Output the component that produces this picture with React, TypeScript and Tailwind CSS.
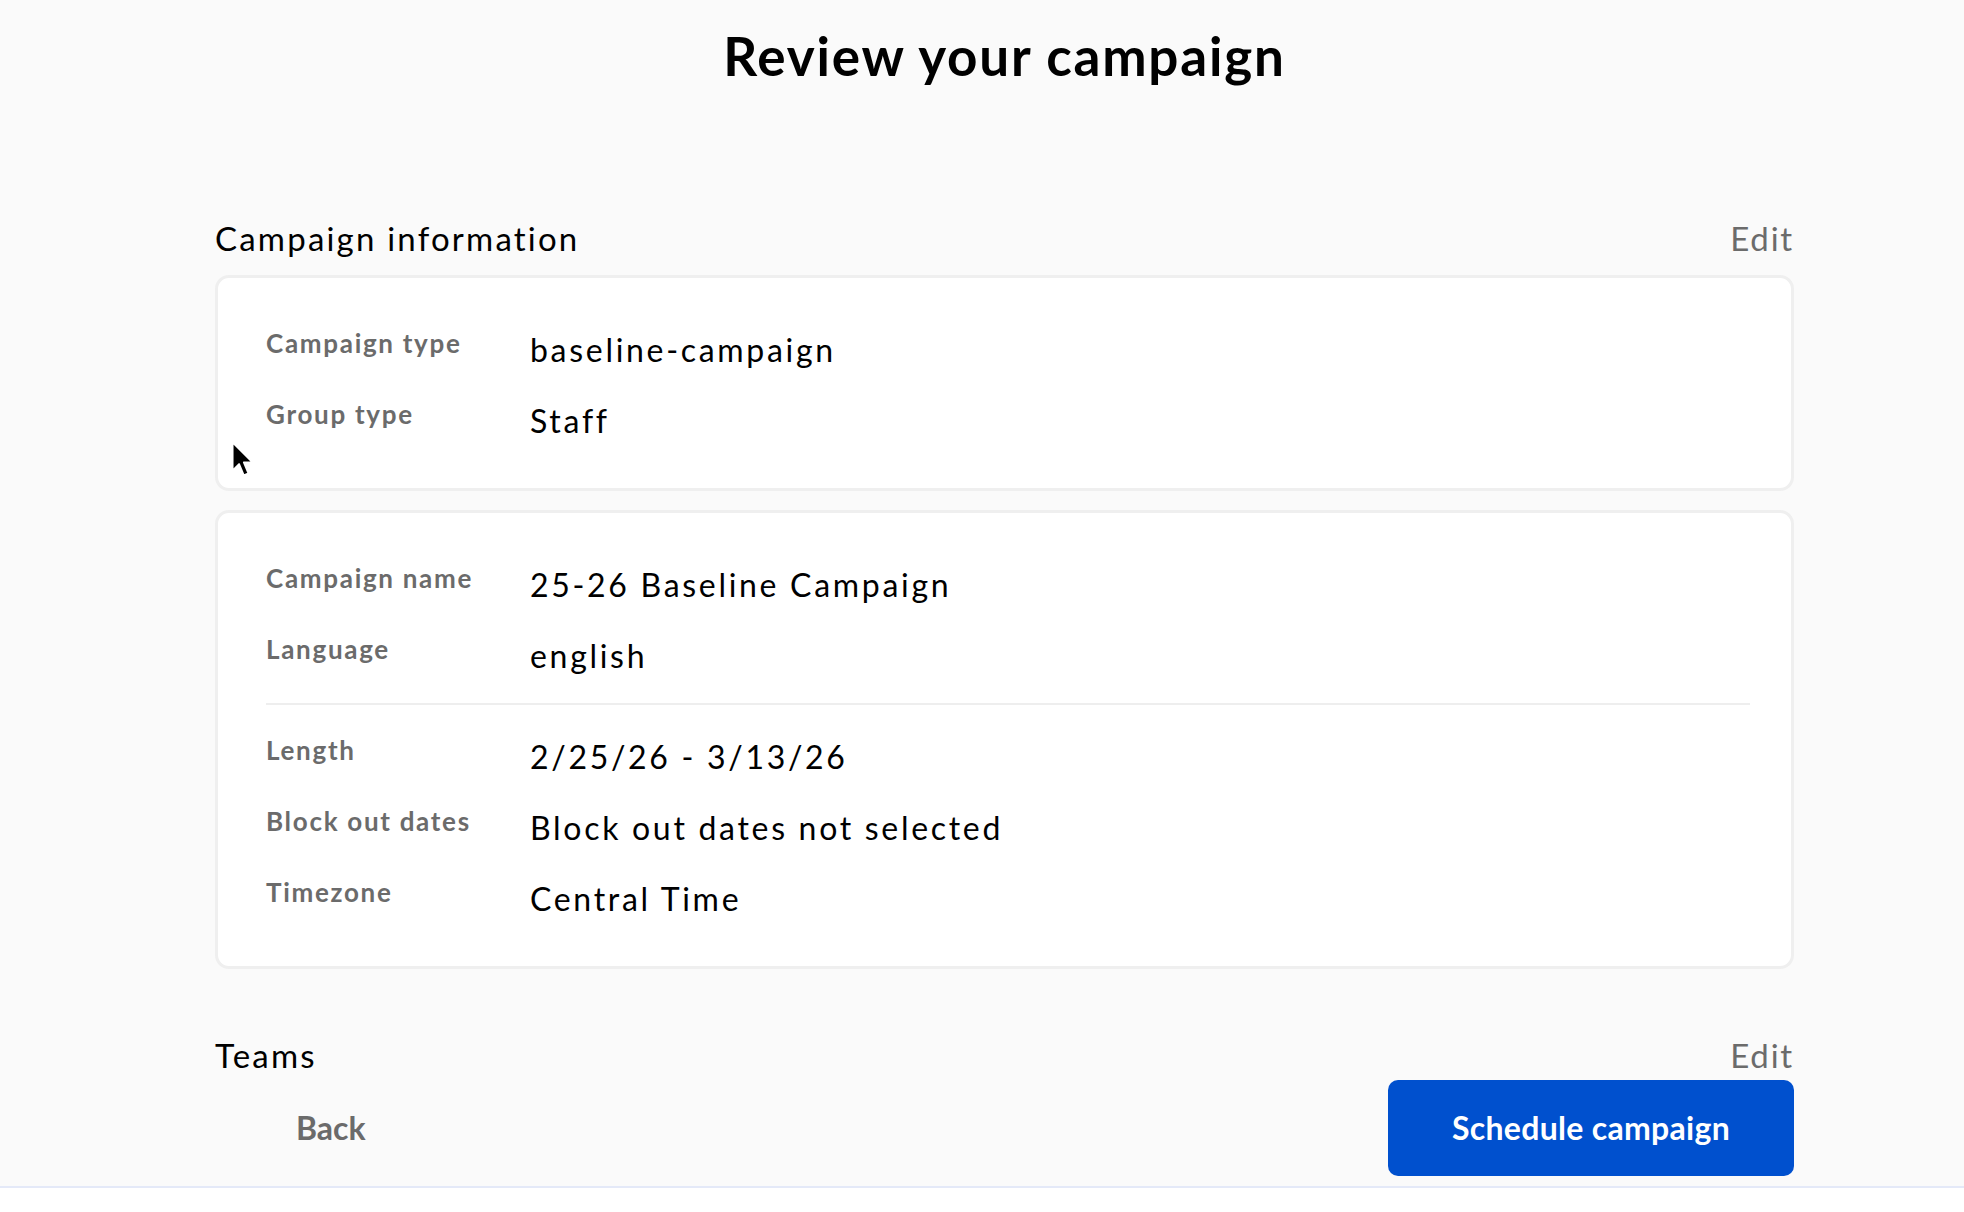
import React from 'react';

type Row = { label: string; value: string };

const typeRows: Row[] = [
  { label: 'Campaign type', value: 'baseline-campaign' },
  { label: 'Group type', value: 'Staff' },
];

const nameRows: Row[] = [
  { label: 'Campaign name', value: '25-26 Baseline Campaign' },
  { label: 'Language', value: 'english' },
];

const scheduleRows: Row[] = [
  { label: 'Length', value: '2/25/26 - 3/13/26' },
  { label: 'Block out dates', value: 'Block out dates not selected' },
  { label: 'Timezone', value: 'Central Time' },
];

function SectionHeader({ title }: { title: string }) {
  return (
    <div className="flex items-center justify-between">
      <h2 className="text-[33px] leading-[40px] font-normal tracking-[2.2px] text-black">{title}</h2>
      <button className="text-[33px] leading-[40px] tracking-[1.8px] text-[#6b6b6b]">Edit</button>
    </div>
  );
}

function InfoRows({ rows }: { rows: Row[] }) {
  return (
    <div className="flex flex-col gap-[27px]">
      {rows.map((row) => (
        <div key={row.label} className="flex items-start">
          <div className="w-[264px] shrink-0 text-[26px] leading-[30px] font-bold tracking-[1.7px] text-[#6b6b6b]">
            {row.label}
          </div>
          <div className="text-[32px] leading-[44px] tracking-[2.7px] text-black">{row.value}</div>
        </div>
      ))}
    </div>
  );
}

function Card({ children }: { children: React.ReactNode }) {
  return (
    <div className="rounded-[14px] border-[3px] border-[#efefef] bg-white pl-12 pr-[41px] pt-[50px] pb-[45px]">
      {children}
    </div>
  );
}

// mouse pointer resting over the first card
function Pointer() {
  return (
    <svg className="absolute left-[229px] top-[440px]" width="26" height="40" viewBox="0 0 22 34">
      <path
        d="M3 2 L3 26 L8.5 20.5 L12.5 30 L16.5 28.3 L12.6 19 L20 19 Z"
        fill="#000"
        stroke="#fff"
        strokeWidth="1.6"
        strokeLinejoin="round"
      />
    </svg>
  );
}

export default function App() {
  return (
    <div className="relative min-h-screen bg-[#fafafa] font-[Lato,sans-serif] text-black">
      <div className="pl-[215px] pr-[170px]">
        <h1 className="pt-[24px] text-center text-[53px] leading-[64px] font-bold tracking-[1.8px]">
          Review your campaign
        </h1>

        <div className="mt-[130px]">
          <SectionHeader title="Campaign information" />
          <div className="mt-[17px] flex flex-col gap-[19px]">
            <Card>
              <InfoRows rows={typeRows} />
            </Card>
            <Card>
              <InfoRows rows={nameRows} />
              <div className="mt-[25px] mb-[30px] h-[2px] bg-[#eeeeee]" />
              <InfoRows rows={scheduleRows} />
            </Card>
          </div>
        </div>

        <div className="mt-[66px]">
          <SectionHeader title="Teams" />
        </div>

        <div className="mt-[5px] flex items-center justify-between">
          <button className="pl-[81px] text-[32px] font-bold text-[#6b6b6b]">Back</button>
          <button className="h-[96px] w-[406px] rounded-[10px] bg-[#0050ce] text-[32px] font-bold tracking-[0.3px] text-white">
            Schedule campaign
          </button>
        </div>
      </div>

      <div className="mt-[10px] h-[26px] border-t-2 border-[#e4e9f8] bg-white" />

      <Pointer />
    </div>
  );
}
